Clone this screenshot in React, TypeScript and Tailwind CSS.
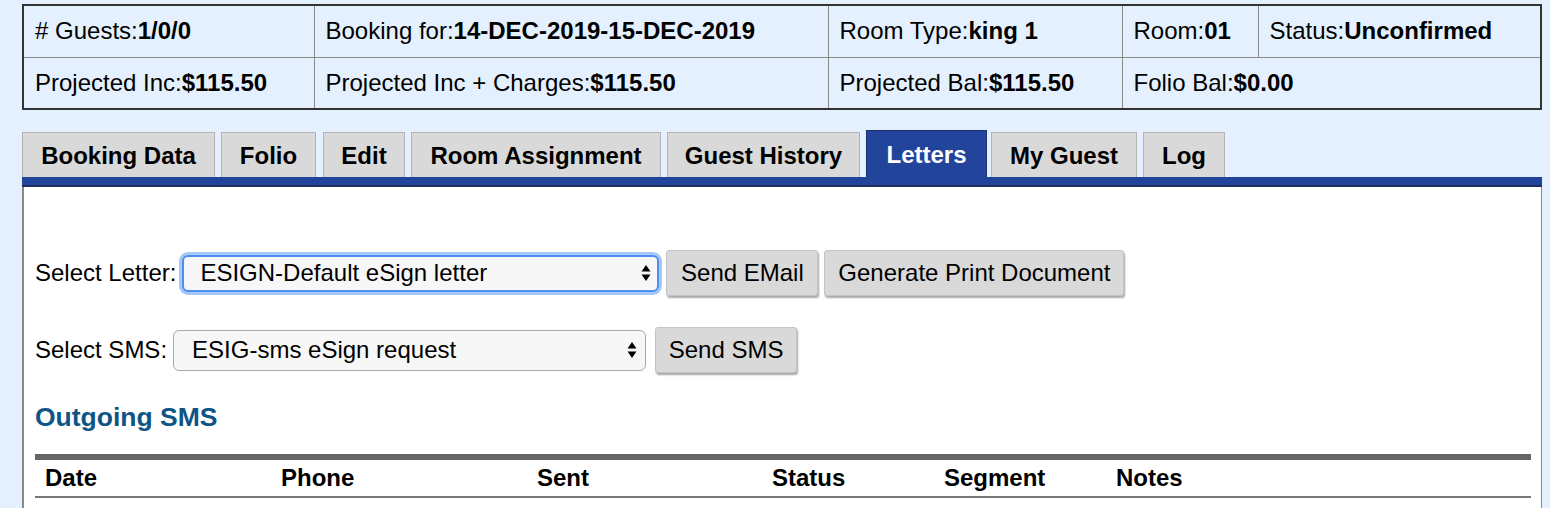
const font = "font-['Liberation_Sans','Helvetica',Arial,sans-serif]";

const tabs = [
    { name: "Booking Data", w: "w-[193px]", gap: "" },
    { name: "Folio", w: "w-[95px]", gap: "ml-[6px]" },
    { name: "Edit", w: "w-[82px]", gap: "ml-[7px]" },
    { name: "Room Assignment", w: "w-[250px]", gap: "ml-[6px]" },
    { name: "Guest History", w: "w-[193px]", gap: "ml-[6px]" },
    { name: "Letters", w: "w-[121px]", gap: "ml-[6px]" },
    { name: "My Guest", w: "w-[146px]", gap: "ml-[4px]" },
    { name: "Log", w: "w-[82px]", gap: "ml-[6px]" },
];

const Cell = ({ label, value, span }: { label: string; value: string; span?: number }) => (
    <td colSpan={span} className="border border-[#8a8a8a] px-[11px] h-[52px] text-[24px] text-black whitespace-nowrap">
        {label}:<b>{value}</b>
    </td>
);

// up/down arrows of a native select
const Arrows = () => (
    <svg width="10" height="18" viewBox="0 0 10 18">
        <path d="M5 1 L9.5 7.5 L0.5 7.5 Z" fill="#000" />
        <path d="M5 17 L9.5 10.5 L0.5 10.5 Z" fill="#000" />
    </svg>
);

const SelectBox = ({ text, focused, width }: { text: string; focused?: boolean; width: string }) => (
    <div
        className={`${width} flex items-center justify-between rounded-[6px] bg-[#f7f7f7] text-[24px] ${
            focused
                ? "h-[37px] pl-[16px] pr-[6px] border-2 border-[#4d8ff0] shadow-[0_0_0_3px_#a6c8f6]"
                : "h-[41px] pl-[18px] pr-[8px] border border-[#a9a9a9]"
        }`}
    >
        <span>{text}</span>
        <Arrows />
    </div>
);

const Btn = ({ children, width }: { children: string; width: string }) => (
    <button
        className={`${width} h-[46px] bg-[#d9d9d9] rounded-[3px] border border-[#c4c4c4] shadow-[1px_2px_2px_rgba(0,0,0,0.35)] text-[24px] text-black`}
    >
        {children}
    </button>
);

const App = () => {
    return (
        <div className={`w-[1550px] h-[508px] overflow-hidden bg-[#e4f0fd] ${font}`}>
            <div className="pl-[22px] pr-[8px] pt-[4px]">
                <table className="w-full table-fixed border-collapse border-2 border-[#333] bg-[#e4f0fd]">
                    <colgroup>
                        <col className="w-[291px]" />
                        <col className="w-[514px]" />
                        <col className="w-[294px]" />
                        <col className="w-[136px]" />
                        <col />
                    </colgroup>
                    <tbody>
                        <tr>
                            <Cell label="# Guests" value="1/0/0" />
                            <Cell label="Booking for" value="14-DEC-2019-15-DEC-2019" />
                            <Cell label="Room Type" value="king 1" />
                            <Cell label="Room" value="01" />
                            <Cell label="Status" value="Unconfirmed" />
                        </tr>
                        <tr>
                            <Cell label="Projected Inc" value="$115.50" />
                            <Cell label="Projected Inc + Charges" value="$115.50" />
                            <Cell label="Projected Bal" value="$115.50" />
                            <Cell label="Folio Bal" value="$0.00" span={2} />
                        </tr>
                    </tbody>
                </table>

                {/* tabs */}
                <div className="mt-[20px] flex items-end">
                    {tabs.map((t) => (
                        <div
                            key={t.name}
                            className={`${t.w} ${t.gap} text-center whitespace-nowrap font-bold text-[24px] ${
                                t.name === "Letters"
                                    ? "bg-[#22449a] text-white h-[47px] border border-[#1a3370] border-b-0 leading-[47px]"
                                    : "bg-[#d9d9d9] text-black h-[45px] border border-[#b3b3b3] border-b-0 leading-[45px]"
                            }`}
                        >
                            {t.name}
                        </div>
                    ))}
                </div>
                <div className="h-[10px] bg-[#22449a] border-b-2 border-[#1d2f5e]" />

                <div className="bg-white border-l-2 border-r border-[#8a8a8a] h-[330px] pl-[11px] pr-[10px] pt-[63px]">
                    <div className="flex items-center text-[24px]">
                        <span>Select Letter:</span>
                        <div className="ml-[6px]">
                            <SelectBox text="ESIGN-Default eSign letter" focused width="w-[477px]" />
                        </div>
                        <div className="flex gap-[6px] ml-[7px]">
                            <Btn width="w-[152px]">Send EMail</Btn>
                            <Btn width="w-[300px]">Generate Print Document</Btn>
                        </div>
                    </div>
                    <div className="mt-[31px] flex items-center text-[24px]">
                        <span>Select SMS:</span>
                        <div className="ml-[6px]">
                            <SelectBox text="ESIG-sms eSign request" width="w-[473px]" />
                        </div>
                        <div className="ml-[9px]">
                            <Btn width="w-[142px]">Send SMS</Btn>
                        </div>
                    </div>
                    <h2 className="mt-[29px] text-[26.5px] leading-[30px] font-bold text-[#0e5585]">
                        Outgoing SMS
                    </h2>
                    <div className="mt-[22px] border-t-[6px] border-[#666] border-b-2 border-b-[#777]">
                        <div className="grid grid-cols-[236px_256px_235px_172px_172px_1fr] px-[10px] h-[36px] items-center font-bold text-[24px]">
                            <span>Date</span>
                            <span>Phone</span>
                            <span>Sent</span>
                            <span>Status</span>
                            <span>Segment</span>
                            <span>Notes</span>
                        </div>
                    </div>
                </div>
            </div>
        </div>
    );
};

export default App;
